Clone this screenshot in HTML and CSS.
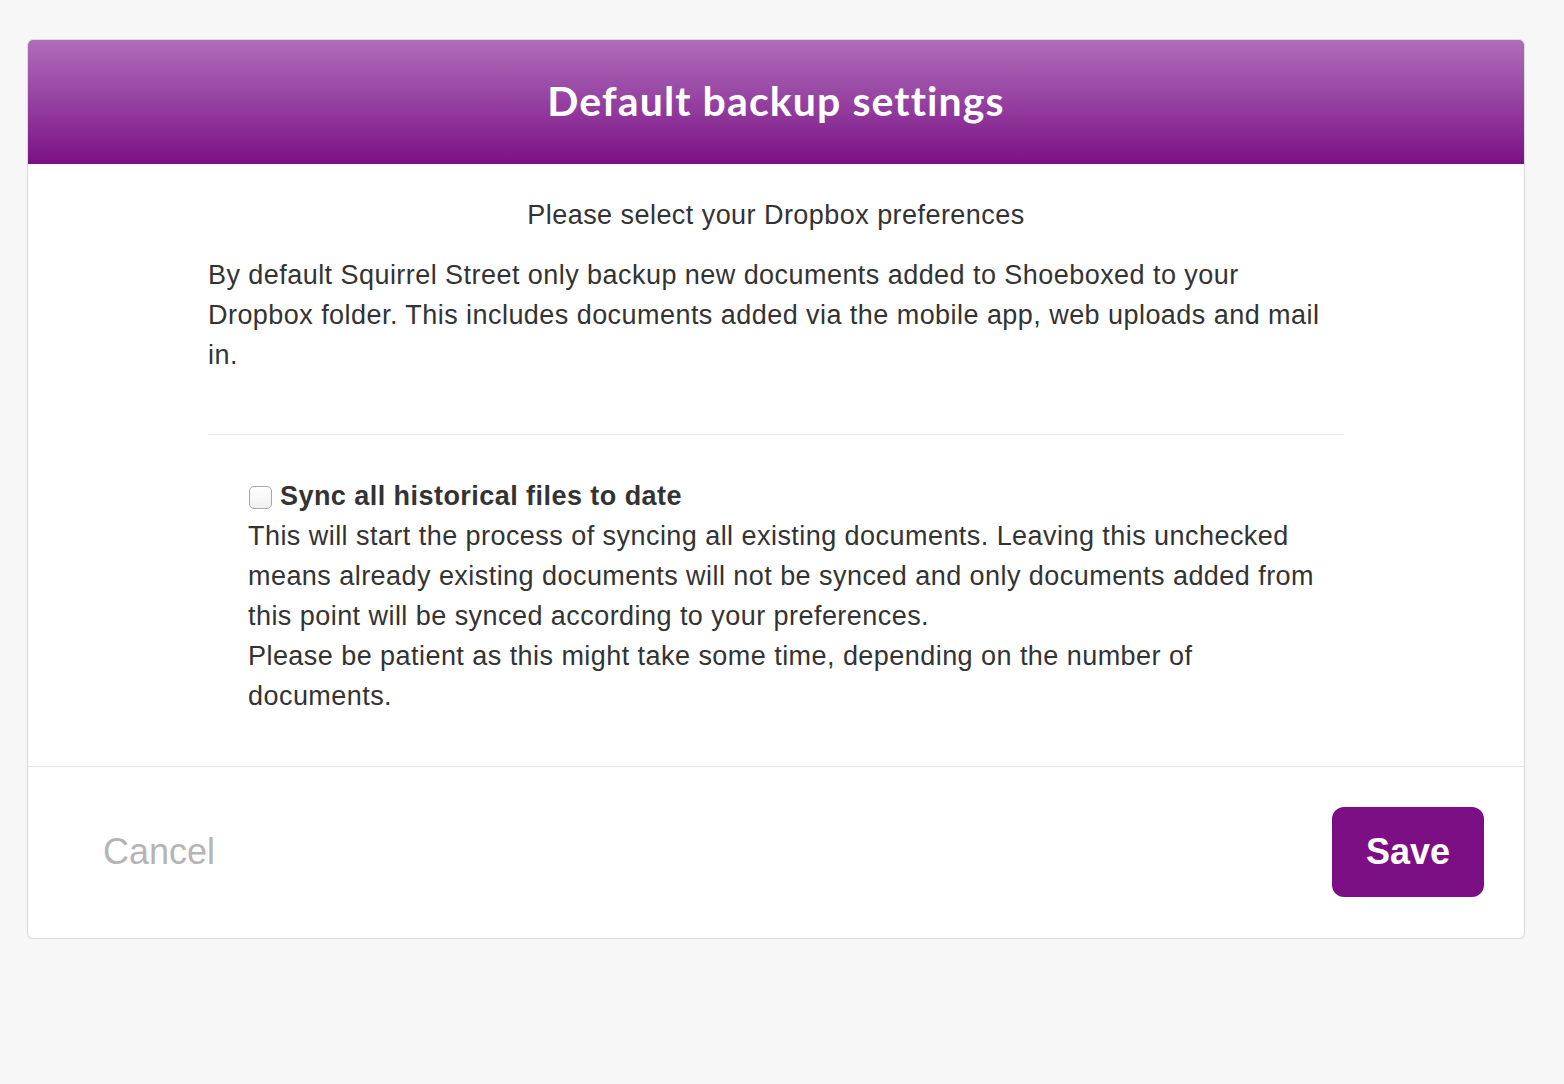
FILE: index.html
```html
<!DOCTYPE html>
<html lang="en">
<head>
<meta charset="utf-8">
<title>Default backup settings</title>
<link rel="stylesheet" href="styles.css">
</head>
<body>
<div class="modal">
  <div class="modal-header">
    <h1 class="modal-title">Default backup settings</h1>
  </div>
  <div class="modal-body">
    <p class="intro">Please select your Dropbox preferences</p>
    <p class="desc">By default Squirrel Street only backup new documents added to Shoeboxed to your Dropbox folder. This includes documents added via the mobile app, web uploads and mail in.</p>
    <hr class="divider">
    <div class="option">
      <label class="option-label"><span class="checkbox"></span>Sync all historical files to date</label>
      <p class="option-text">This will start the process of syncing all existing documents. Leaving this unchecked means already existing documents will not be synced and only documents added from this point will be synced according to your preferences.<br>Please be patient as this might take some time, depending on the number of documents.</p>
    </div>
  </div>
  <div class="modal-footer">
    <span class="cancel">Cancel</span>
    <span class="save">Save</span>
  </div>
</div>
</body>
</html>
```

FILE: styles.css
```css
html, body {
  margin: 0;
  padding: 0;
  background: #f7f7f7;
}
body {
  padding: 39px 0 0 27px;
  font-family: "Liberation Sans", Arial, sans-serif;
  color: #333;
}
.modal {
  width: 1496px;
  background: #fff;
  border: 1px solid #dcdcdc;
  border-radius: 6px;
  overflow: hidden;
  box-shadow: 0 1px 2px rgba(0,0,0,0.05);
}
.modal-header {
  height: 124px;
  box-sizing: border-box;
  padding-bottom: 3px;
  display: flex;
  align-items: center;
  justify-content: center;
  background: linear-gradient(to bottom, #ae6db7 0%, #9a4aa6 40%, #7b1184 100%);
}
.modal-title {
  margin: 0;
  color: #fff;
  font-family: "Lato", "Open Sans", sans-serif;
  font-weight: 700;
  font-size: 41px;
  letter-spacing: 1.1px;
}
.modal-body {
  padding: 31px 180px 50px;
  font-size: 27px;
  letter-spacing: 0.45px;
  line-height: 40px;
}
.intro {
  margin: 0 0 20px;
  text-align: center;
}
.desc {
  margin: 0;
}
.divider {
  border: 0;
  border-top: 1px solid #eaeaea;
  margin: 59px 0 41px;
}
.option {
  padding-left: 40px;
}
.option-label {
  display: flex;
  align-items: center;
  font-weight: 700;
  height: 40px;
}
.checkbox {
  width: 21px;
  height: 21px;
  border: 1px solid #a8a8a8;
  border-radius: 5px;
  background: linear-gradient(#fff, #f0f0f0);
  margin: 2px 8px 0 1px;
  flex: none;
}
.option-text {
  margin: 0;
}
.modal-footer {
  border-top: 1px solid #e8e8e8;
  display: flex;
  align-items: center;
  justify-content: space-between;
  padding: 40px 40px 41px 75px;
}
.cancel {
  color: #b5b5b5;
  font-size: 36px;
}
.save {
  display: flex;
  align-items: center;
  justify-content: center;
  width: 152px;
  height: 90px;
  background: #7b0f83;
  color: #fff;
  font-weight: 700;
  font-size: 36px;
  border-radius: 12px;
}
```
